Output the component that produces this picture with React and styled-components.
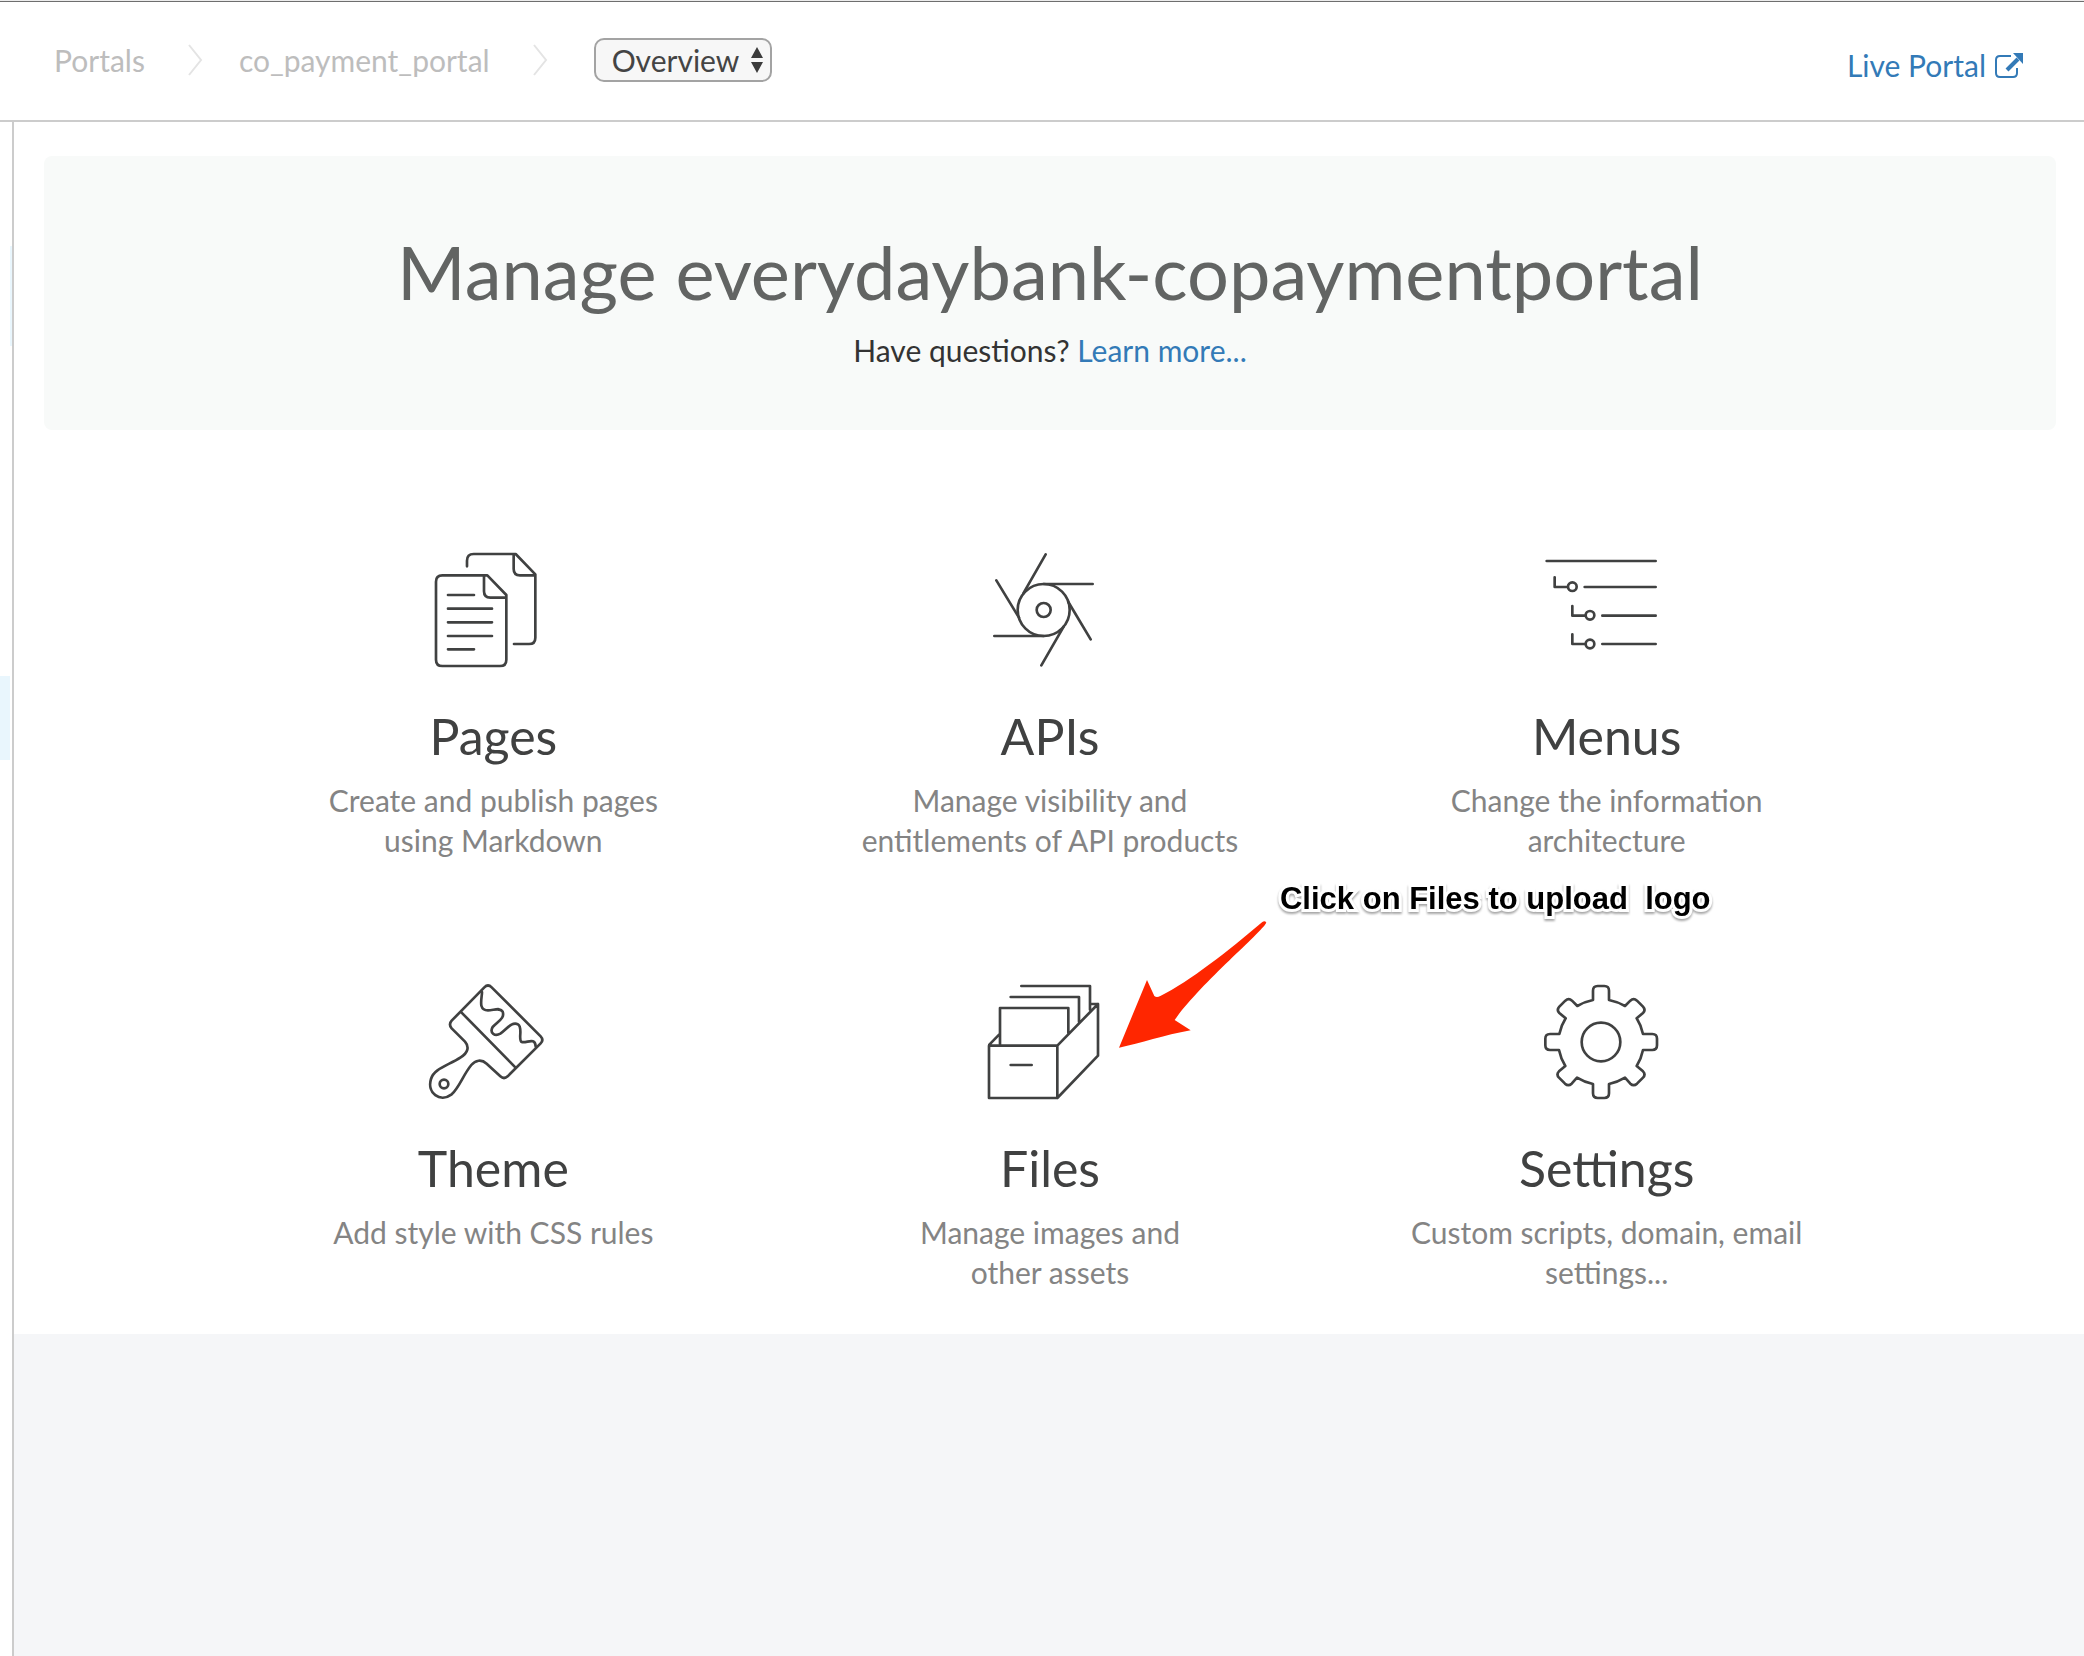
import React from "react";
import styled, { createGlobalStyle } from "styled-components";

const GlobalStyle = createGlobalStyle`
  *, *::before, *::after { box-sizing: border-box; }
  html, body, #root { min-height: 100vh; }
  body {
    margin: 0;
    background: #f5f6f8;
    color: #333;
    font-family: Lato, "Open Sans", sans-serif;
    font-size: 30px;
    line-height: 40px;
  }
`;

const Page = styled.div`
  display: flex;
  flex-direction: column;
  min-height: 100vh;
`;

const Header = styled.header`
  display: flex;
  align-items: center;
  justify-content: space-between;
  height: 122px;
  padding: 0 60px 2px 54px;
  background: #fff;
  border-top: 1px solid #ececec;
  border-bottom: 2px solid #ccc;
  box-shadow: inset 0 1px #6e6e6e;
`;

const Breadcrumb = styled.nav`
  display: flex;
  align-items: center;
`;

const Crumb = styled.a`
  color: #bdbdbd;
  text-decoration: none;
`;

const Chevron = styled.svg`
  width: 16px;
  height: 32px;
  margin: 0 36px 0 42px;
  fill: none;
  stroke: #e4e4e4;
  stroke-width: 2;
`;

const Picker = styled.label`
  position: relative;
  display: block;
  margin-left: 10px;
`;

const Select = styled.select`
  appearance: none;
  display: block;
  width: 178px;
  height: 44px;
  padding: 0 30px 0 16px;
  border: 2px solid #a3a3a3;
  border-radius: 10px;
  background: #f7f7f7;
  color: #444;
  font: inherit;
`;

const Arrows = styled.svg`
  position: absolute;
  right: 8px;
  top: 9px;
  width: 14px;
  height: 26px;
  fill: #3c3c3c;
  pointer-events: none;
`;

const Link = styled.a`
  color: #337ab7;
  text-decoration: none;
`;

const LiveLink = styled(Link)`
  display: flex;
  align-items: center;
  gap: 8px;
  margin-top: 10px;
`;

const ExternalIcon = styled.svg`
  width: 30px;
  height: 26px;
  fill: none;
  stroke: currentColor;
`;

const Body = styled.div`
  display: flex;
  flex: 1;
`;

const Sidebar = styled.aside`
  display: flex;
  flex-direction: column;
  align-items: flex-start;
  width: 14px;
  padding-top: 124px;
  background: #fff;
  border-right: 2px solid #ccc;
`;

const SideMark = styled.span`
  width: ${(p) => (p.$edge ? 2 : 10)}px;
  height: ${(p) => (p.$edge ? 100 : 84)}px;
  align-self: ${(p) => (p.$edge ? "flex-end" : "flex-start")};
  background: #e9f6fd;
  & + & { margin-top: 330px; }
`;

const Main = styled.main`
  flex: 1;
`;

const Content = styled.div`
  padding: 34px 28px 42px 30px;
  background: #fff;
`;

const Hero = styled.section`
  padding: 76px 0 60px;
  border-radius: 8px;
  background: #f8faf9;
  text-align: center;
`;

const Title = styled.h1`
  margin: 0 0 18px;
  color: #626463;
  font-size: 74px;
  font-weight: 400;
  line-height: 80px;
`;

const Text = styled.p`
  margin: 0;
`;

const Grid = styled.div`
  display: grid;
  grid-template-columns: repeat(3, 1fr);
  width: 83%;
  margin: 120px auto 0;
  row-gap: 122px;
`;

const Card = styled.article`
  position: relative;
  display: flex;
  flex-direction: column;
  align-items: center;
  text-align: center;
`;

const CardLink = styled.a`
  display: flex;
  flex-direction: column;
  align-items: center;
  color: #404141;
  text-decoration: none;
`;

const Icon = styled.svg`
  width: 120px;
  height: 120px;
  margin-right: 14px;
  fill: none;
  stroke: #404141;
  stroke-width: 8;
  stroke-linecap: round;
  stroke-linejoin: round;
`;

const CardTitle = styled.h2`
  margin: 36px 0 14px;
  font-size: 50px;
  font-weight: 400;
  line-height: 60px;
`;

const Description = styled.p`
  max-width: 420px;
  margin: 0;
  color: #848484;
  white-space: pre-line;
`;

const Arrow = styled.svg`
  position: absolute;
  left: calc(50% + 68px);
  top: -62px;
  width: 150px;
  height: 130px;
  fill: #ff2600;
  pointer-events: none;
`;

const Note = styled.div`
  position: absolute;
  left: calc(50% + 230px);
  top: -101px;
  color: #000;
  font: 700 31px/36px "Liberation Sans", Arial, sans-serif;
  white-space: pre;
  paint-order: stroke fill;
  -webkit-text-stroke: 6px #fff;
  filter: drop-shadow(0 2px 1px rgba(0, 0, 0, 0.35));
`;

const cards = [
  {
    title: "Pages",
    text: "Create and publish pages\nusing Markdown",
    view: "78 60 360 360",
    art: (
      <>
        <path d="M201 109V92q0-20 20-20h126l59 61v190q0 19-19 19h-45M341 74v43q0 19 19 19h44" />
        <path d="M262 136H127q-19 0-19 19v234q0 19 19 19h173q19 0 19-19V195zM252 139v45q0 19 19 19h46" />
        <path d="M144 195h78M144 236h132M144 277h132M144 318h132M144 358h78" />
      </>
    ),
  },
  {
    title: "APIs",
    text: "Manage visibility and\nentitlements of API products",
    view: "69 60 360 360",
    art: (
      <>
        <circle cx="251" cy="240" r="78" />
        <circle cx="251" cy="240" r="21" />
        <path d="M251 162h147M325 216l67 112M311 290l-67 116M251 318H103M177 263L109 151M190 190l67-117" />
      </>
    ),
  },
  {
    title: "Menus",
    text: "Change the information\narchitecture",
    view: "60 60 360 360",
    art: (
      <>
        <path d="M80 93h327M194 171h213M247 257h160M247 342h160" />
        <path d="M104 142v29h39M157 228v29h39M157 313v29h39" />
        <circle cx="157" cy="170" r="13" />
        <circle cx="210" cy="256" r="13" />
        <circle cx="210" cy="342" r="13" />
      </>
    ),
  },
  {
    title: "Theme",
    text: "Add style with CSS rules",
    view: "78 66 360 360",
    art: (
      <>
        <path d="M253 82q11-11 22 0l147 147q10 11 0 21L323 349q-11 10-22 0l-41-38c-15-14-34-11-46 4-25 30-35 66-59 88-35 26-75-4-62-46 9-31 50-40 89-65 23-14 26-32 13-47l-40-40q-10-12 0-23zM184 157l162 165" />
        <path d="M246 96c0 20-13 55 18 55 17 0 37-10 44 4 7 20-14 29-30 46-10 17 6 30 23 20 17-11 34-38 53-28 16 10-1 47 11 53 16 4 40-15 42 13" />
        <circle cx="132" cy="372" r="13" />
      </>
    ),
  },
  {
    title: "Files",
    text: "Manage images and\nother assets",
    view: "69 246 360 360",
    annotated: true,
    art: (
      <>
        <path d="M87 437h205v157H87zM292 437l122-125v155L292 594M120 432V324h205v75M152 291h205v74M184 258h206v71M392 312h22M88 434l30-31M152 495h63" />
      </>
    ),
  },
  {
    title: "Settings",
    text: "Custom scripts, domain, email\nsettings...",
    view: "60 66 360 360",
    art: (
      <>
        <circle cx="243" cy="246" r="58" />
        <path d="M219 120V92q0-14 14-14h20q14 0 14 14v28q25 5 48 18l16-16q10-9 20 0l18 18q9 10 0 19l-19 16q14 22 19 47h28q14 0 14 14v20q0 14-14 14h-28q-5 25-19 48l19 16q9 9 0 19l-18 18q-10 9-20 0l-16-18q-23 14-48 19v28q0 14-14 14h-20q-14 0-14-14v-28q-25-5-48-19l-16 18q-10 9-20 0l-18-18q-9-10 0-19l19-16q-14-23-19-48H90q-14 0-14-14v-20q0-14 14-14h28q5-25 19-47l-19-16q-9-9 0-19l18-18q10-9 20 0l16 16q22-13 47-18z" />
      </>
    ),
  },
];

function Separator() {
  return (
    <Chevron viewBox="0 0 16 32" aria-hidden="true">
      <path d="M2 1l12 15L2 31" />
    </Chevron>
  );
}

export default function App() {
  return (
    <Page>
      <GlobalStyle />
      <Header>
        <Breadcrumb aria-label="Breadcrumb">
          <Crumb href="#portals">Portals</Crumb>
          <Separator />
          <Crumb href="#portal">co_payment_portal</Crumb>
          <Separator />
          <Picker>
            <Select aria-label="Section" defaultValue="Overview">
              <option>Overview</option>
            </Select>
            <Arrows viewBox="0 0 14 26" aria-hidden="true">
              <path d="M7 0l6 11H1zM7 26l6-11H1z" />
            </Arrows>
          </Picker>
        </Breadcrumb>
        <LiveLink href="#live">
          Live Portal
          <ExternalIcon viewBox="0 0 30 26" aria-hidden="true">
            <path strokeWidth="2" d="M17 4H6q-4 0-4 4v13q0 4 4 4h13q4 0 4-4v-5" />
            <path strokeWidth="4" d="M13 18L24 7" />
            <path fill="currentColor" stroke="none" d="M19 1h10v11z" />
          </ExternalIcon>
        </LiveLink>
      </Header>
      <Body>
        <Sidebar>
          <SideMark $edge />
          <SideMark />
        </Sidebar>
        <Main>
          <Content>
            <Hero>
              <Title>Manage everydaybank-copaymentportal</Title>
              <Text>
                Have questions? <Link href="#learn">Learn more...</Link>
              </Text>
            </Hero>
            <Grid>
              {cards.map((card) => (
                <Card key={card.title}>
                  <CardLink href={"#" + card.title.toLowerCase()}>
                    <Icon viewBox={card.view} aria-hidden="true">
                      {card.art}
                    </Icon>
                    <CardTitle>{card.title}</CardTitle>
                  </CardLink>
                  <Description>{card.text}</Description>
                  {card.annotated && (
                    <>
                      <Arrow viewBox="472 60 450 390" aria-hidden="true">
                        <path d="M475 443L559 240l22 48q7 6 18 0C690 242 800 155 905 66q8-5 12 2C900 100 720 250 642 360l48 31C610 405 540 430 475 443z" />
                      </Arrow>
                      <Note>{"Click on Files to upload  logo"}</Note>
                    </>
                  )}
                </Card>
              ))}
            </Grid>
          </Content>
        </Main>
      </Body>
    </Page>
  );
}
